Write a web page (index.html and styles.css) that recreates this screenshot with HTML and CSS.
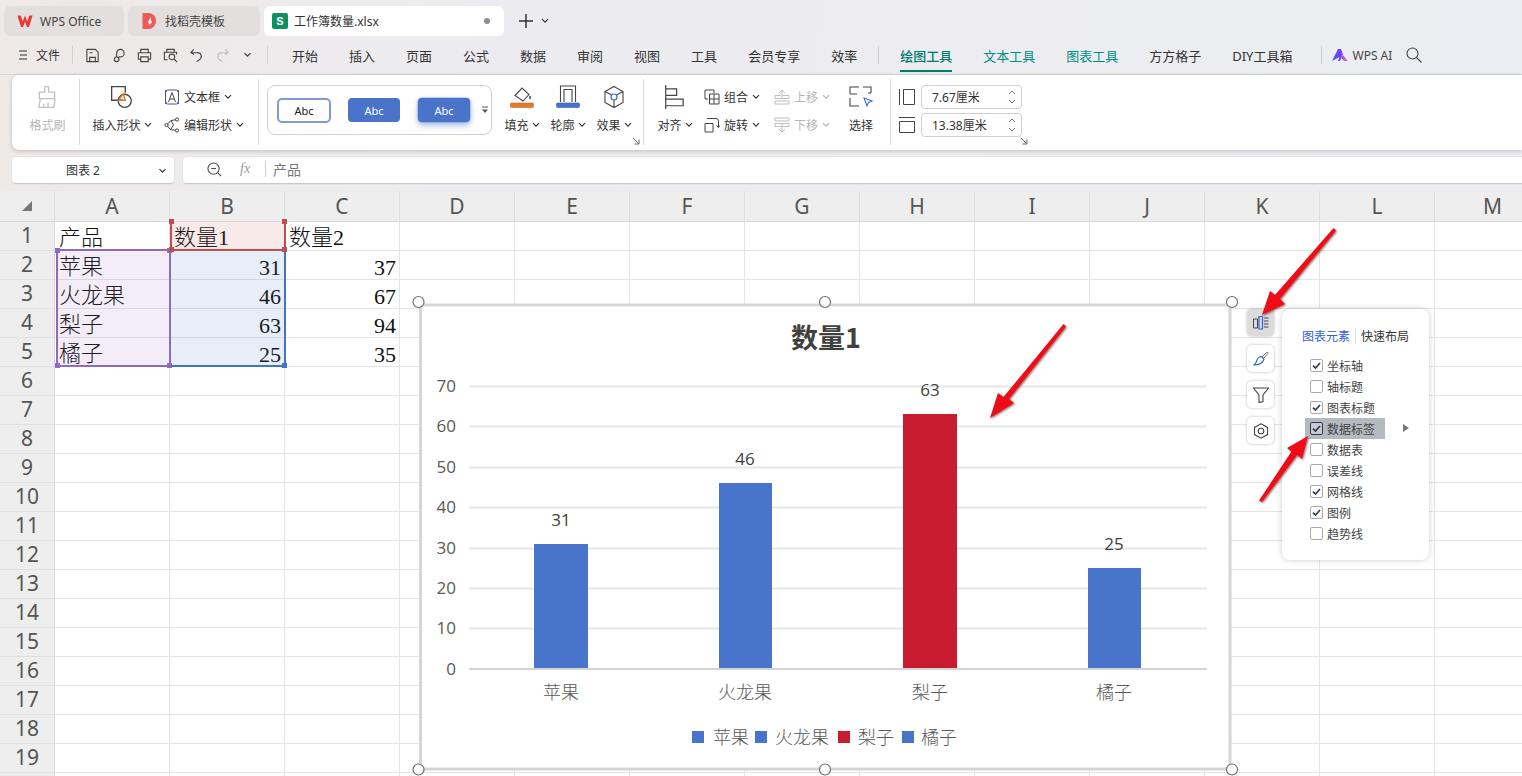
FILE: index.html
```html
<!DOCTYPE html>
<html lang="zh">
<head>
<meta charset="utf-8">
<title>工作簿数量.xlsx</title>
<link rel="stylesheet" href="styles.css">
</head>
<body>
<svg class="defs" width="0" height="0">
  <symbol id="chev" viewBox="0 0 8 6"><path d="M1 1.2 4 4.2 7 1.2" fill="none" stroke="#333" stroke-width="1.2"/></symbol>
  <symbol id="chevg" viewBox="0 0 8 6"><path d="M1 1.2 4 4.2 7 1.2" fill="none" stroke="#b5b5b5" stroke-width="1.2"/></symbol>
  <symbol id="corner" viewBox="0 0 8 8"><path d="M1 1 6.5 6.5M7 2.5V7H2.5" fill="none" stroke="#666" stroke-width="1"/></symbol>
  <symbol id="tick" viewBox="0 0 13 13"><path d="M3 6.6 5.5 9 10 4" fill="none" stroke="#333c4e" stroke-width="1.7"/></symbol>
</svg>

<header class="tabs">
  <div class="tab tab-home">
    <svg class="tab-ico" viewBox="0 0 16 14"><path d="M0.5 1.5h3.2l2 6 2.3-6 2.3 6 2-6h3.2L12 13H10L8 7.5 6 13H4z" fill="#e8382b"/></svg>
    <span>WPS Office</span>
  </div>
  <div class="tab tab-tpl">
    <svg class="tab-ico" viewBox="0 0 15 16"><path d="M0 0h6a7.500 8 0 0 1 0 16H0z" fill="#ee5a56"/><path d="M7.500 4c.3 2.500-2.500 3.500-1.500 6 .5 1 1.500 1.500 1.500 2 0-1.500 2.500-2 2-4.500-.3 1-1 1.300-1.200 1.300C8.500 7 8.500 5 7.500 4z" fill="#fff"/></svg>
    <span>找稻壳模板</span>
  </div>
  <div class="tab tab-active">
    <svg class="tab-ico" viewBox="0 0 16 16"><rect width="16" height="16" rx="2" fill="#0e8f62"/><text x="8" y="12" class="s-letter">S</text></svg>
    <span class="tab-title">工作簿数量.xlsx</span>
    <i class="tab-dot"></i>
  </div>
  <svg class="tab-plus" viewBox="0 0 14 14"><path d="M7 0v14M0 7h14" stroke="#333" stroke-width="1.5"/></svg>
  <svg class="tab-more"><use href="#chev"/></svg>
</header>

<nav class="menu">
  <svg class="m-burger" viewBox="0 0 10 10"><path d="M1 1h8M2 5h7M1 9h8" stroke="#333" stroke-width="1.1"/></svg>
  <span class="m-file">文件</span>
  <i class="m-sep"></i>
  <div class="quick">
    <svg viewBox="0 0 16 16"><path d="M2 1.500h9l3 3V14.500H2zM5 14.500V10h6v4.500M5 5h3" fill="none" stroke="#444" stroke-width="1.200"/></svg>
    <svg viewBox="0 0 16 16"><path d="M6 9V5.500a4 4 0 1 1 4 4H8.500M6 9.500a2.500 2.500 0 1 0 0 5 2.500 2.500 0 0 0 0-5z" fill="none" stroke="#444" stroke-width="1.200"/></svg>
    <svg viewBox="0 0 16 16"><path d="M4 5V1.500h8V5M4 12H1.500V5h13v7H12M4 9.500h8v5H4z" fill="none" stroke="#444" stroke-width="1.200"/></svg>
    <svg viewBox="0 0 16 16"><path d="M4 4.500V1.500h8v3M5 12.500H1.500v-8h13V7M9.500 6.500a3 3 0 1 0 0 6 3 3 0 0 0 0-6zM12 12l3 3" fill="none" stroke="#444" stroke-width="1.200"/></svg>
    <svg viewBox="0 0 16 16"><path d="M5 1.500 2 5l3.500 2M2.500 5H9a4 4 0 0 1 2 7.500L8 14.500" fill="none" stroke="#444" stroke-width="1.200"/></svg>
    <svg viewBox="0 0 16 16"><path d="M11 1.500 14 5l-3.500 2M13.500 5H7a4 4 0 0 0-2 7.500L8 14.500" fill="none" stroke="#bbb" stroke-width="1.200"/></svg>
    <svg class="q-chev"><use href="#chev"/></svg>
  </div>
  <i class="m-sep m-sep-b"></i>
  <ul class="m-items">
    <li>开始</li><li>插入</li><li>页面</li><li>公式</li><li>数据</li><li>审阅</li><li>视图</li><li>工具</li><li>会员专享</li><li>效率</li>
    <li class="m-div"></li>
    <li class="m-tool m-on">绘图工具</li><li class="m-tool">文本工具</li><li class="m-tool">图表工具</li><li>方方格子</li><li>DIY工具箱</li>
    <li class="m-div m-div-b"></li>
    <li class="m-ai">
      <svg viewBox="0 0 16 12"><defs><linearGradient id="aig" x1="0" x2="1"><stop offset="0" stop-color="#3b5bff"/><stop offset=".55" stop-color="#7a3cff"/><stop offset="1" stop-color="#ff8a9a"/></linearGradient></defs><path d="M0 12 6 0h3l2 5-3 7H6l1.500-4zM9.500 9 11 6l5 6h-4z" fill="url(#aig)"/></svg>
      <span>WPS AI</span>
    </li>
    <li class="m-search"><svg viewBox="0 0 16 16"><circle cx="6.500" cy="6.500" r="5.500" fill="none" stroke="#444" stroke-width="1.100"/><path d="M10.500 10.500 15.500 15.500" stroke="#444" stroke-width="1.100"/></svg></li>
  </ul>
</nav>

<section class="ribbon">
  <div class="group g-fmt">
    <div class="big off">
      <div class="big-ico"><svg viewBox="0 0 22 22"><path d="M9 1.500h3.500v5H18v6H4v-6h5zM5 12.500 3.500 20.500h14l1-8M8 20V17M12 20V16" fill="none" stroke="#c2c2c2" stroke-width="1.200"/></svg></div>
      <span>格式刷</span>
    </div>
  </div>
  <div class="group g-shape">
    <div class="big b-shape">
      <div class="big-ico"><svg viewBox="0 0 22 22"><path d="M12 14H1.500V1.500H14V7" fill="none" stroke="#444" stroke-width="1.200"/><circle cx="13.500" cy="14.500" r="6" fill="none" stroke="#444" stroke-width="1.200"/><path d="M8 14 12 8l2 6z" fill="none" stroke="#e07a2c" stroke-width="1.300"/></svg></div>
      <span>插入形状<svg class="cv"><use href="#chev"/></svg></span>
    </div>
    <div class="col">
      <div class="row">
        <svg class="ri" viewBox="0 0 16 16"><path d="M3 1h10M3 15h10M1.500 3v10M14.500 3v10" fill="none" stroke="#555" stroke-width="1"/><path d="M1 1h2v2H1zM13 1h2v2h-2zM1 13h2v2H1zM13 13h2v2h-2z" fill="#3a6fd8"/><path d="M4.500 13 8 3.500 11.500 13M5.800 10h4.400" fill="none" stroke="#444" stroke-width="1"/></svg>
        <span>文本框</span><svg class="cv cv-w"><use href="#chev"/></svg>
      </div>
      <div class="row">
        <svg class="ri" viewBox="0 0 16 16"><path d="M13 2.500 7 3.500 2.500 8l4 4.500 6.500 1M7 3.500 9.500 8 6.500 12.500" fill="none" stroke="#444" stroke-width="1"/><circle cx="13" cy="2.500" r="1.600" fill="#fff" stroke="#444"/><circle cx="2.500" cy="8" r="1.600" fill="#fff" stroke="#444"/><circle cx="13" cy="13.500" r="1.600" fill="#fff" stroke="#444"/></svg>
        <span>编辑形状</span><svg class="cv cv-w"><use href="#chev"/></svg>
      </div>
    </div>
  </div>
  <div class="group g-style">
    <div class="gallery">
      <span class="abc abc-line">Abc</span>
      <span class="abc abc-fill">Abc</span>
      <span class="abc abc-glow">Abc</span>
      <svg class="gal-more" viewBox="0 0 8 8"><path d="M1 1h6" stroke="#555" stroke-width="1"/><path d="M1 3.500h6L4 7z" fill="#555"/></svg>
    </div>
    <div class="big b36">
      <div class="big-ico"><svg viewBox="0 0 24 24"><path d="M5 10.500 12 3l7 6.500-6 6.500z" fill="none" stroke="#444" stroke-width="1.100"/><path d="M20 11v3" stroke="#444" stroke-width="1.500"/><rect x=".5" y="18" width="23" height="4.500" rx="1" fill="#e07a2c" stroke="#c06a28" stroke-width=".6"/></svg></div>
      <span>填充<svg class="cv"><use href="#chev"/></svg></span>
    </div>
    <div class="big b36">
      <div class="big-ico"><svg viewBox="0 0 24 24"><path d="M4.500 17V1h15v16M8 17V4.500h8V17" fill="none" stroke="#444" stroke-width="1.100"/><rect x=".5" y="18" width="23" height="4.500" rx="1" fill="#4472c4" stroke="#3a62a8" stroke-width=".6"/></svg></div>
      <span>轮廓<svg class="cv"><use href="#chev"/></svg></span>
    </div>
    <div class="big b36">
      <div class="big-ico"><svg viewBox="0 0 24 24"><path d="M12 1.500 21 6.500v11L12 22.500 3 17.500v-11zM3 6.500 9.500 10M21 6.500 14.500 10M12 15v7.500" fill="none" stroke="#444" stroke-width="1.100"/><circle cx="12" cy="12" r="3" fill="none" stroke="#3a6fd8" stroke-width="1.200"/></svg></div>
      <span>效果<svg class="cv"><use href="#chev"/></svg></span>
    </div>
    <svg class="corner"><use href="#corner"/></svg>
  </div>
  <div class="group g-arr">
    <div class="big b36">
      <div class="big-ico"><svg viewBox="0 0 20 22"><path d="M1.500 0v22M1.500 3.500h10v6h-10M1.500 13h16v6h-16" fill="none" stroke="#444" stroke-width="1.100"/></svg></div>
      <span>对齐<svg class="cv"><use href="#chev"/></svg></span>
    </div>
    <div class="col c56">
      <div class="row">
        <svg class="ri" viewBox="0 0 16 16"><path d="M1 1h9v3M1 1v9h3M5.500 5h9.500v10H5.500zM5.500 10H15M10 5v10" fill="none" stroke="#444" stroke-width="1"/></svg>
        <span>组合</span><svg class="cv cv-w"><use href="#chev"/></svg>
      </div>
      <div class="row">
        <svg class="ri" viewBox="0 0 16 16"><path d="M1 6.500h8v8.500H1zM3 1.500h9a2.500 2.500 0 0 1 2.500 2.500v6M12.500 8.500l2 2 1.500-2" fill="none" stroke="#444" stroke-width="1"/></svg>
        <span>旋转</span><svg class="cv cv-w"><use href="#chev"/></svg>
      </div>
    </div>
    <div class="col c58 off">
      <div class="row">
        <svg class="ri" viewBox="0 0 16 16"><path d="M8 10V1M5 4l3-3 3 3M1 6.500h6M9 6.500h6M1 6.500v3h14v-3M1 12h14v3H1z" fill="none" stroke="#bdbdbd" stroke-width="1"/></svg>
        <span>上移</span><svg class="cv cv-w"><use href="#chevg"/></svg>
      </div>
      <div class="row">
        <svg class="ri" viewBox="0 0 16 16"><path d="M8 6v9M5 12l3 3 3-3M1 1h14v3H1zM1 6.500h14v3H1z" fill="none" stroke="#bdbdbd" stroke-width="1"/></svg>
        <span>下移</span><svg class="cv cv-w"><use href="#chevg"/></svg>
      </div>
    </div>
    <div class="big b26">
      <div class="big-ico"><svg viewBox="0 0 24 22"><path d="M1 8V1h9M14 1h8v6M1 12v8h9M19 7h3M1 8h7" fill="none" stroke="#444" stroke-width="1.100"/><path d="M15 12 23 15l-3.500 1.500L18 20z" fill="#fff" stroke="#3a6fd8" stroke-width="1.100"/></svg></div>
      <span>选择</span>
    </div>
  </div>
  <div class="group g-size">
    <div class="size-row">
      <svg class="si" viewBox="0 0 16 16"><path d="M.5 0v16M4.500 .5h11v15h-11z" fill="none" stroke="#444" stroke-width="1"/></svg>
      <div class="spin"><span>7.67厘米</span><svg class="updown" viewBox="0 0 8 16"><path d="M1 5 4 2l3 3M1 11l3 3 3-3" fill="none" stroke="#777"/></svg></div>
    </div>
    <div class="size-row">
      <svg class="si" viewBox="0 0 16 16"><path d="M0 .5h16M.5 4.500h15v11H.5z" fill="none" stroke="#444" stroke-width="1"/></svg>
      <div class="spin"><span>13.38厘米</span><svg class="updown" viewBox="0 0 8 16"><path d="M1 5 4 2l3 3M1 11l3 3 3-3" fill="none" stroke="#777"/></svg></div>
    </div>
    <svg class="corner"><use href="#corner"/></svg>
  </div>
</section>

<section class="fbar">
  <div class="namebox"><span>图表 2</span><svg class="nb-cv"><use href="#chev"/></svg></div>
  <div class="formula">
    <svg class="f-zoom" viewBox="0 0 16 16"><circle cx="7" cy="7" r="6" fill="none" stroke="#444" stroke-width="1.100"/><path d="M4.500 7h5M11.500 11.500 15 15" stroke="#444" stroke-width="1.100"/></svg>
    <span class="f-fx">fx</span>
    <i class="f-sep"></i>
    <span class="f-text">产品</span>
  </div>
</section>

<main class="sheet">
  <div class="colhead">
    <div class="corner-cell"><i></i></div>
    <div>A</div><div>B</div><div>C</div><div>D</div><div>E</div><div>F</div><div>G</div><div>H</div><div>I</div><div>J</div><div>K</div><div>L</div><div>M</div>
  </div>
  <div class="sheet-body">
    <div class="rowhead">
      <div>1</div><div>2</div><div>3</div><div>4</div><div>5</div><div>6</div><div>7</div><div>8</div><div>9</div><div>10</div><div>11</div><div>12</div><div>13</div><div>14</div><div>15</div><div>16</div><div>17</div><div>18</div><div>19</div><div></div>
    </div>
    <div class="cells">
      <div class="range r-purple"><i class="h h-tl"></i><i class="h h-tr"></i><i class="h h-bl"></i><i class="h h-br"></i></div>
      <div class="range r-red"><i class="h h-tl"></i><i class="h h-tr"></i><i class="h h-bl"></i><i class="h h-br"></i></div>
      <div class="range r-blue"><i class="h h-br"></i></div>

      <div class="cell a1">产品</div><div class="cell b1">数量1</div><div class="cell c1">数量2</div>
      <div class="cell a2">苹果</div><div class="cell b2 num">31</div><div class="cell c2 num">37</div>
      <div class="cell a3">火龙果</div><div class="cell b3 num">46</div><div class="cell c3 num">67</div>
      <div class="cell a4">梨子</div><div class="cell b4 num">63</div><div class="cell c4 num">94</div>
      <div class="cell a5">橘子</div><div class="cell b5 num">25</div><div class="cell c5 num">35</div>
    </div>
  </div>
</main>

<svg class="chart" viewBox="410 290 830 486">
  <rect class="c-bg" x="420.500" y="305" width="809.500" height="464"/>
  <g class="c-grid">
    <path d="M469 386.500H1207M469 426.500H1207M469 467.500H1207M469 507.500H1207M469 548.500H1207M469 588.500H1207M469 628.500H1207"/>
    <path class="c-axis" d="M469 669H1207"/>
  </g>
  <text class="c-title" x="826" y="348">数量1</text>
  <g class="c-y">
    <text x="456" y="392">70</text><text x="456" y="432">60</text><text x="456" y="473">50</text><text x="456" y="513">40</text><text x="456" y="554">30</text><text x="456" y="594">20</text><text x="456" y="634">10</text><text x="456" y="675">0</text>
  </g>
  <rect class="c-blue" x="534" y="544" width="54" height="124"/>
  <rect class="c-blue" x="719" y="483" width="53" height="185"/>
  <rect class="c-red" x="903" y="414" width="54" height="254"/>
  <rect class="c-blue" x="1088" y="568" width="53" height="100"/>
  <g class="c-val">
    <text x="561" y="526">31</text><text x="745" y="465">46</text><text x="930" y="396">63</text><text x="1114" y="550">25</text>
  </g>
  <g class="c-cat">
    <text x="561" y="699">苹果</text><text x="745" y="699">火龙果</text><text x="930" y="699">梨子</text><text x="1114" y="699">橘子</text>
  </g>
  <g class="c-leg">
    <rect class="c-blue" x="692" y="731" width="12" height="12"/><text x="713" y="744">苹果</text>
    <rect class="c-blue" x="755" y="731" width="12" height="12"/><text x="775" y="744">火龙果</text>
    <rect class="c-red" x="838" y="731" width="12" height="12"/><text x="858" y="744">梨子</text>
    <rect class="c-blue" x="902" y="731" width="12" height="12"/><text x="921" y="744">橘子</text>
  </g>
  <g class="c-h">
    <circle cx="418.500" cy="302" r="5.500"/><circle cx="825" cy="302" r="5.500"/><circle cx="1232" cy="302" r="5.500"/>
    <circle cx="418.500" cy="769.500" r="5.500"/><circle cx="825" cy="769.500" r="5.500"/><circle cx="1232" cy="769.500" r="5.500"/>
  </g>
</svg>

<aside class="tools">
  <div class="tool tool-on"><svg viewBox="0 0 16 16"><path d="M.5 4h4v9h-4z" fill="none" stroke="#444"/><path d="M6 1.500h3.500V14H6z" fill="none" stroke="#2f62d6" stroke-width="1.200"/><path d="M11 3h4.500M11 6h4.500M11 9h4.500M11 12h4.500" stroke="#444"/></svg></div>
  <div class="tool"><svg viewBox="0 0 16 16"><path d="M9 6 13.500 1.500c1-.8 2 .2 1.300 1.200L10.500 7.500z" fill="none" stroke="#666"/><path d="M8.500 5.500 11 8c-1 3.500-5 6-10 6 2-1.500 2.500-3 3-5 .8-2 3-3.500 4.500-3.500z" fill="none" stroke="#2f62d6" stroke-width="1.100"/></svg></div>
  <div class="tool"><svg viewBox="0 0 16 16"><path d="M.5 1h15L10 8v6.500l-4 1V8z" fill="none" stroke="#444" stroke-width="1.100"/></svg></div>
  <div class="tool"><svg viewBox="0 0 16 16"><path d="M8 .8 14.500 4.400v7.200L8 15.200 1.500 11.600V4.400z" fill="none" stroke="#444" stroke-width="1.100"/><circle cx="8" cy="8" r="2.800" fill="none" stroke="#444" stroke-width="1.100"/></svg></div>
</aside>

<aside class="popup">
  <div class="p-tabs"><span class="p-on">图表元素</span><i></i><span>快速布局</span></div>
  <ul class="p-list">
    <li><b class="ck"><svg><use href="#tick"/></svg></b>坐标轴</li>
    <li><b class="ck"></b>轴标题</li>
    <li><b class="ck"><svg><use href="#tick"/></svg></b>图表标题</li>
    <li class="p-hot"><b class="ck"><svg><use href="#tick"/></svg></b>数据标签<em></em></li>
    <li><b class="ck"></b>数据表</li>
    <li><b class="ck"></b>误差线</li>
    <li><b class="ck"><svg><use href="#tick"/></svg></b>网格线</li>
    <li><b class="ck"><svg><use href="#tick"/></svg></b>图例</li>
    <li><b class="ck"></b>趋势线</li>
  </ul>
</aside>

<svg class="arrows" viewBox="0 0 1522 776">
  <defs><filter id="ash" x="-30%" y="-30%" width="160%" height="160%"><feDropShadow dx="1" dy="1" stdDeviation="1" flood-color="#300" flood-opacity=".6"/></filter></defs>
  <g fill="#ee0f16" filter="url(#ash)">
    <path d="M1333.500 228 1336 230.500 1280 299 1285 304 1262 315 1270 291 1275 295z"/>
    <path d="M1063.500 324 1066 326.500 1009 399 1014 403 990 418 998 393 1003.500 397z"/>
    <path d="M1259 500.500 1262 502 1297 455 1302 459 1308 436 1287 448 1291.500 451.500z"/>
  </g>
</svg>
</body>
</html>
```

FILE: styles.css
```css
* { box-sizing: border-box; margin: 0; padding: 0; }
html, body { width: 1522px; height: 776px; overflow: hidden; }
body {
  position: relative;
  display: flex;
  flex-direction: column;
  font-family: "Noto Sans", "Noto Sans CJK SC", sans-serif;
  font-size: 12px;
  color: #333;
  background: linear-gradient(100deg, #efe9e7 0, #ececf0 30%, #ecedf2 100%);
}
ul { list-style: none; }
i, em { font-style: normal; display: block; }
svg { display: block; flex: none; }
.defs { position: absolute; }

/* title tabs */
.tabs { display: flex; align-items: center; height: 30px; margin-top: 6px; padding-left: 4px; gap: 4px; flex: none; }
.tab { height: 30px; border-radius: 6px; display: flex; align-items: center; background: #e2dfde; font-size: 12px; color: #444; }
.tab-home { width: 120px; padding-left: 13px; gap: 7px; }
.tab-tpl { width: 132px; padding-left: 14px; gap: 7px; }
.tab-active { width: 240px; padding-left: 8px; gap: 6px; background: #fff; color: #333; }
.tab-ico { width: 16px; height: 16px; }
.tab-home .tab-ico { height: 14px; }
.s-letter { font: 700 11px "Liberation Sans", sans-serif; fill: #fff; text-anchor: middle; }
.tab-title { flex: 1; }
.tab-dot { width: 6px; height: 6px; border-radius: 50%; background: #8e8e8e; margin-right: 14px; }
.tab-plus { width: 14px; height: 14px; margin-left: 11px; }
.tab-more { width: 8px; height: 6px; margin-left: 4px; }

/* menu */
.menu { display: flex; align-items: center; height: 39px; padding-left: 18px; flex: none; border-bottom: 1px solid #d8d8dc; }
.m-burger { width: 10px; height: 10px; }
.m-file { margin-left: 8px; width: 26px; font-size: 12px; }
.m-sep { width: 1px; height: 18px; background: #d0d0d0; margin-left: 10px; }
.m-sep-b { margin-left: 15px; }
.quick { display: flex; align-items: center; gap: 11px; margin-left: 12px; }
.quick svg { width: 15px; height: 15px; }
.quick .q-chev { width: 9px; height: 6px; margin-left: 2px; }
.m-items { display: flex; align-items: center; gap: 31px; margin-left: 24px; height: 100%; font-size: 13px; white-space: nowrap; }
.m-items li { position: relative; }
.m-div { width: 1px; height: 18px; background: #cfcfcf; margin: 0 -10px 0 -10px; }
.m-div-b { margin: 0 -21px 0 -2px; }
.m-tool { color: #008f7f; }
.m-on { color: #007a6a; font-weight: 500; }
.m-on::after { content: ""; position: absolute; left: 0; right: 0; top: 24px; height: 2px; background: #007a6a; }
.m-ai { display: flex; align-items: center; gap: 4px; font-size: 12px; color: #444; }
.m-ai svg { width: 16px; height: 12px; }
.m-search { margin-left: -17px; }
.m-search svg { width: 16px; height: 16px; }

/* ribbon */
.ribbon { display: flex; height: 75px; margin-left: 12px; background: #fff; border-radius: 7px 0 0 7px; box-shadow: 0 1px 4px rgba(0,0,0,.2); flex: none; }
.group { position: relative; display: flex; height: 66px; margin-top: 4px; padding-top: 4px; border-right: 1px solid #dcdcdc; }
.g-fmt { width: 68px; justify-content: center; padding: 4px 0 0 4px; }
.g-shape { width: 179px; padding-left: 13px; gap: 13px; }
.g-style { width: 385px; padding-left: 8px; gap: 10px; }
.g-arr { width: 247px; padding-left: 13px; }
.g-size { flex: 1; border-right: 0; padding-left: 8px; flex-direction: column; }
.big { display: flex; flex-direction: column; align-items: center; }
.big-ico { height: 28px; display: flex; align-items: center; justify-content: center; }
.big-ico svg { width: 24px; height: 24px; }
.big > span { height: 28px; display: flex; align-items: center; white-space: nowrap; color: #333; }
.off .big-ico + span, .off > .row > span { color: #b5b5b5; }
.cv { width: 8px; height: 6px; margin-left: 3px; }
.b-shape { width: 58px; }
.b36 { width: 36px; }
.b26 { width: 26px; margin-left: 16px; }
.g-arr .b36 { margin-right: 11px; }
.col { display: flex; flex-direction: column; }
.c56 { width: 56px; margin-right: 14px; }
.c58 { width: 58px; }
.row { display: flex; align-items: center; height: 28px; white-space: nowrap; }
.ri { width: 16px; height: 16px; margin-right: 4px; }
.cv-w { margin-left: 4px; }
.corner { position: absolute; width: 8px; height: 8px; right: 3px; bottom: 0; }
.g-size .corner { left: 129px; right: auto; }
.gallery { width: 225px; height: 50px; margin-top: 2px; margin-right: 2px; border: 1px solid #cfcfcf; border-radius: 8px; display: flex; align-items: center; position: relative; font-size: 11px; }
.abc { position: absolute; display: flex; align-items: center; justify-content: center; border-radius: 4px; height: 24px; top: 12px; }
.abc-line { left: 9px; width: 54px; height: 25px; background: #fff; border: 2px solid #7e9bd8; color: #222; border-radius: 5px; }
.abc-fill { left: 80px; width: 52px; background: #4a74ca; color: #fff; }
.abc-glow { left: 150px; width: 52px; background: #4a74ca; color: #fff; box-shadow: 0 3px 6px rgba(74,116,202,.55), 0 0 0 1px #c8d5ef; }
.gal-more { position: absolute; right: 2px; top: 20px; width: 8px; height: 8px; }
.size-row { display: flex; align-items: center; height: 28px; gap: 6px; }
.si { width: 16px; height: 16px; }
.spin { width: 101px; height: 24px; border: 1px solid #cfcfcf; border-radius: 4px; display: flex; align-items: center; justify-content: space-between; padding: 0 5px 0 10px; font-size: 12px; }
.updown { width: 8px; height: 16px; }

/* formula bar */
.fbar { display: flex; gap: 9px; margin: 7px 0 0 12px; height: 27px; flex: none; }
.namebox { position: relative; width: 162px; background: #fff; border-radius: 4px; border-bottom: 1px solid #c8c8c8; box-shadow: 0 0 0 1px #e4e4e6; display: flex; align-items: center; padding-left: 54px; }
.nb-cv { position: absolute; right: 7px; top: 11px; width: 9px; height: 6px; }
.formula { flex: 1; background: #fff; border-radius: 4px 0 0 4px; border-bottom: 1px solid #c8c8c8; box-shadow: 0 0 0 1px #e4e4e6; display: flex; align-items: center; padding: 0 0 2px 24px; }
.f-zoom { width: 15px; height: 15px; }
.f-fx { margin-left: 18px; font: italic 14px "Liberation Serif", serif; color: #999; }
.f-sep { width: 1px; height: 16px; background: #ccc; margin-left: 15px; }
.f-text { margin-left: 7px; font-size: 14px; color: #777; }

/* sheet */
.sheet { flex: 1; margin-top: 7px; background: #fff; min-height: 0; overflow: hidden; }
.colhead { display: grid; grid-template-columns: 55px repeat(13, 115px); height: 31px; background: #eeeeee; font-size: 21px; color: #555; border-bottom: 1px solid #d9d9d9; }
.colhead > div { display: flex; align-items: center; justify-content: center; border-right: 1px solid #e0e0e0; }
.colhead > div:last-child { border-right: 0; }
.corner-cell i { width: 0; height: 0; border-style: solid; border-width: 0 0 10px 10px; border-color: transparent transparent #777 transparent; }
.sheet-body { display: flex; }
.rowhead { width: 55px; background: #eeeeee; flex: none; }
.rowhead > div { height: 29px; display: flex; align-items: center; justify-content: center; padding-bottom: 2px; font-size: 21px; color: #555; border-bottom: 1px solid #e0e0e0; border-right: 1px solid #d9d9d9; }
.cells {
  flex: 1;
  display: grid;
  grid-template-columns: repeat(13, 115px);
  grid-template-rows: repeat(20, 29px);
  background-color: #fff;
  background-image: linear-gradient(to right, #e4e4e4 1px, transparent 1px), linear-gradient(to bottom, #e4e4e4 1px, transparent 1px);
  background-size: 115px 100%, 100% 29px;
  background-position: -1px 0, 0 -1px;
}
.cell { font: 300 22px/29px "Liberation Serif", "Noto Sans CJK SC", serif; color: #111; padding: 1px 4px 0; white-space: nowrap; }
.num { text-align: right; padding-top: 2px; }
.a1 { grid-area: 1 / 1; } .b1 { grid-area: 1 / 2; } .c1 { grid-area: 1 / 3; }
.a2 { grid-area: 2 / 1; } .b2 { grid-area: 2 / 2; } .c2 { grid-area: 2 / 3; }
.a3 { grid-area: 3 / 1; } .b3 { grid-area: 3 / 2; } .c3 { grid-area: 3 / 3; }
.a4 { grid-area: 4 / 1; } .b4 { grid-area: 4 / 2; } .c4 { grid-area: 4 / 3; }
.a5 { grid-area: 5 / 1; } .b5 { grid-area: 5 / 2; } .c5 { grid-area: 5 / 3; }
.range { position: relative; border: 2px solid; }
.r-purple { grid-area: 2 / 1 / 6 / 2; border-color: #9069c0; background: rgba(144,105,192,.12); margin: -2px -1px 0 1px; border-bottom-width: 2px; }
.r-red { grid-area: 1 / 2 / 2 / 3; border-color: #c0504d; border-top: 0; background: rgba(192,80,77,.12); margin: 0 -1px 0 0; }
.r-blue { grid-area: 2 / 2 / 6 / 3; border-color: #4472c4; border-top: 0; border-left: 0; background: rgba(68,114,196,.12); margin: 0 -1px 0 1px; }
.h { position: absolute; width: 5px; height: 5px; background: inherit; }
.r-purple .h { background: #9069c0; }
.r-red .h { background: #c0504d; }
.r-blue .h { background: #4472c4; }
.h-tl { left: -3px; top: -3px; } .h-tr { right: -3px; top: -3px; }
.h-bl { left: -3px; bottom: -3px; } .h-br { right: -3px; bottom: -3px; }

/* chart */
.chart { position: absolute; left: 410px; top: 290px; width: 830px; height: 486px; overflow: hidden; }
.c-bg { fill: #fff; stroke: #d6d6d6; stroke-width: 3; }
.c-grid path { stroke: #e6e6e6; stroke-width: 2; fill: none; }
.c-grid .c-axis { stroke: #d4d4d4; }
.c-title { font: 700 27px "Noto Sans CJK SC", sans-serif; fill: #404040; text-anchor: middle; }
.c-y text { font: 17px "Open Sans", "Noto Sans", sans-serif; fill: #595959; text-anchor: end; }
.c-val text { font: 17px "Open Sans", "Noto Sans", sans-serif; fill: #404040; text-anchor: middle; }
.c-cat text { font: 300 18px "Noto Sans CJK SC", sans-serif; fill: #595959; text-anchor: middle; }
.c-leg text { font: 300 18px "Noto Sans CJK SC", sans-serif; fill: #595959; }
.c-blue { fill: #4874cb; }
.c-red { fill: #c81d31; }
.c-h circle { fill: #fff; stroke: #6e6e6e; stroke-width: 1.200; }

/* chart side tools */
.tools { position: absolute; left: 1247px; top: 309px; display: flex; flex-direction: column; gap: 9px; }
.tool { width: 27px; height: 27px; background: #fff; border-radius: 5px; box-shadow: 0 0 3px rgba(0,0,0,.28); display: flex; align-items: center; justify-content: center; }
.tool svg { width: 16px; height: 16px; }
.tool-on { background: #dcdcdc; }

/* popup */
.popup { position: absolute; left: 1282px; top: 309px; width: 147px; height: 251px; background: #fff; border-radius: 8px; box-shadow: 0 0 6px rgba(0,0,0,.2); padding-top: 18px; }
.p-tabs { display: flex; align-items: center; height: 18px; padding-left: 20px; white-space: nowrap; }
.p-tabs i { width: 1px; height: 15px; background: #ddd; margin: 0 5px; }
.p-on { color: #2f62d6; }
.p-list { margin-top: 10px; margin-left: 28px; }
.p-list li { position: relative; display: flex; align-items: center; height: 21px; gap: 4px; color: #444; }
.ck { width: 13px; height: 13px; flex: none; border: 1px solid #aaa; border-radius: 2px; background: #fff; position: relative; }
.ck svg { position: absolute; left: -1px; top: -1px; width: 13px; height: 13px; }
.p-hot { isolation: isolate; }
.p-hot::before { content: ""; position: absolute; z-index: -1; left: -5px; top: 0; width: 80px; height: 21px; background: #b5b9c2; }
.p-hot .ck { border-color: #333c4e; background: #c6cad2; }
.p-hot em { position: absolute; left: 93px; top: 6px; width: 0; height: 0; border-style: solid; border-width: 4px 0 4px 6px; border-color: transparent transparent transparent #777; }

.arrows { position: absolute; left: 0; top: 0; width: 1522px; height: 776px; pointer-events: none; }
```
